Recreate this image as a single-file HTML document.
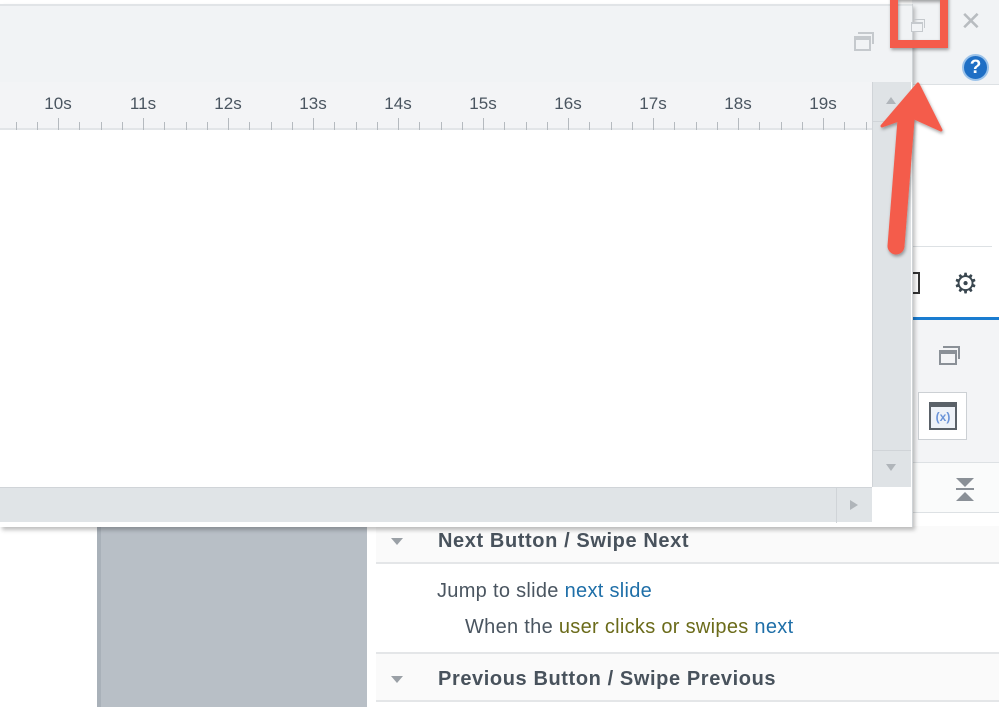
<!DOCTYPE html>
<html><head><style>
*{margin:0;padding:0;box-sizing:border-box}
body{width:999px;height:707px;overflow:hidden;background:#fff;position:relative;font-family:"Liberation Sans",sans-serif}
.a{position:absolute}
</style></head><body>
<div class="a" style="left:912px;top:0;width:87px;height:85px;background:#f1f3f5;border-bottom:1px solid #dde1e4"></div>
<div class="a" style="left:960px;top:6px;font-size:26px;color:#b8bcc0">✕</div>
<div class="a" style="left:962px;top:54px;width:27px;height:27px;border-radius:50%;background:#1f6fc5;border:2px solid #9cc3ea;color:#fff;font-weight:bold;font-size:19px;text-align:center;line-height:23px">?</div>
<div class="a" style="left:912px;top:246px;width:80px;height:1px;background:#dde1e4"></div>
<div class="a" style="left:912px;top:272px;width:8px;height:22px;border:2px solid #333;border-left:none"></div>
<div class="a" style="left:953px;top:267px;font-size:28px;color:#3a4750">⚙</div>
<div class="a" style="left:912px;top:317px;width:87px;height:3px;background:#1a7cd0"></div>
<div class="a" style="left:912px;top:320px;width:87px;height:143px;background:#f3f4f6;border-bottom:1px solid #dde1e4"></div>
<div class="a" style="left:943px;top:346px;width:17px;height:13px;border:2px solid #8a9097;border-bottom:none;border-left:none"></div>
<div class="a" style="left:939px;top:350px;width:18px;height:15px;border:2px solid #8a9097;border-top-width:4px;background:#f3f4f6"></div>
<div class="a" style="left:918px;top:392px;width:49px;height:48px;background:#fff;border:1px solid #ccd0d4"></div>
<div class="a" style="left:929px;top:402px;width:28px;height:28px;border:2px solid #5a6168;border-top-width:5px;background:#eef2f8;color:#6a93d8;font-size:12px;font-weight:bold;text-align:center;line-height:20px">(x)</div>
<div class="a" style="left:912px;top:463px;width:87px;height:50px;background:#fafbfb;border-bottom:1px solid #dde1e4"></div>
<div class="a" style="left:956px;top:478px;width:0;height:0;border-left:9px solid transparent;border-right:9px solid transparent;border-top:9px solid #8a9097"></div>
<div class="a" style="left:956px;top:488px;width:18px;height:2px;background:#8a9097"></div>
<div class="a" style="left:956px;top:492px;width:0;height:0;border-left:9px solid transparent;border-right:9px solid transparent;border-bottom:9px solid #8a9097"></div>

<div class="a" style="left:97px;top:526px;width:270px;height:181px;background:#b8bfc6;border-left:4px solid #a9b1b9"></div>
<div class="a" style="left:376px;top:526px;width:623px;height:38px;background:#fafafa;border-bottom:2px solid #e4e6e8"></div>
<div class="a" style="left:391px;top:538px;border-left:6px solid transparent;border-right:6px solid transparent;border-top:7px solid #9aa0a6"></div>
<div class="a" style="left:438px;top:530px;font-size:20px;font-weight:bold;color:#48525c;letter-spacing:0.6px">Next Button / Swipe Next</div>
<div class="a" style="left:437px;top:580px;font-size:20px;color:#4a5560;letter-spacing:0.3px">Jump to slide <span style="color:#1f6fa8">next slide</span></div>
<div class="a" style="left:465px;top:616px;font-size:20px;color:#4a5560;letter-spacing:0.3px">When the <span style="color:#6b6b1a">user clicks or swipes</span> <span style="color:#1f6fa8">next</span></div>
<div class="a" style="left:376px;top:652px;width:623px;height:50px;background:#fafafa;border-top:2px solid #e4e6e8;border-bottom:2px solid #e4e6e8"></div>
<div class="a" style="left:391px;top:676px;border-left:6px solid transparent;border-right:6px solid transparent;border-top:7px solid #9aa0a6"></div>
<div class="a" style="left:438px;top:668px;font-size:20px;font-weight:bold;color:#48525c;letter-spacing:0.6px">Previous Button / Swipe Previous</div>

<div class="a" style="left:0;top:4px;width:913px;height:523px;background:#fff;box-shadow:2px 3px 4px rgba(0,0,0,.25);border-right:1px solid #cfd3d6">
 <div class="a" style="left:0;top:0;width:912px;height:78px;background:#f1f3f5;border-top:2px solid #e1e4e7"></div>
 <div class="a" style="left:858px;top:28px;width:16px;height:12px;border:2px solid #c5c9cd;border-bottom:none;border-left:none"></div>
 <div class="a" style="left:854px;top:32px;width:17px;height:15px;border:2px solid #c5c9cd;border-top-width:4px;background:#f1f3f5"></div>
 <div class="a" style="left:914px;top:15px;width:11px;height:9px;border:1px solid #c5c9cd;border-bottom:none;border-left:none"></div>
 <div class="a" style="left:911px;top:18px;width:12px;height:10px;border:1px solid #c5c9cd;border-top-width:2px;background:#f1f3f5"></div>
 <div class="a" style="left:0;top:78px;width:872px;height:48px;background:#f3f4f6;border-bottom:2px solid #e2e5e8">
  <svg width="872" height="48" style="position:absolute;left:0;top:0">
   <g stroke="#b5babf" stroke-width="1">
    <path d="M16.5 40V48M37.5 40V48M79.5 40V48M101.5 40V48M122.5 40V48M164.5 40V48M186.5 40V48M207.5 40V48M249.5 40V48M271.5 40V48M292.5 40V48M334.5 40V48M356.5 40V48M377.5 40V48M419.5 40V48M441.5 40V48M462.5 40V48M504.5 40V48M526.5 40V48M547.5 40V48M589.5 40V48M611.5 40V48M632.5 40V48M674.5 40V48M696.5 40V48M717.5 40V48M759.5 40V48M781.5 40V48M802.5 40V48M844.5 40V48M866.5 40V48"/>
    <path d="M58.5 36V48M143.5 36V48M228.5 36V48M313.5 36V48M398.5 36V48M483.5 36V48M568.5 36V48M653.5 36V48M738.5 36V48M823.5 36V48"/>
   </g>
   <g font-family="Liberation Sans,sans-serif" font-size="17" fill="#4a5560" text-anchor="middle">
    <text x="58" y="27">10s</text><text x="143" y="27">11s</text><text x="228" y="27">12s</text><text x="313" y="27">13s</text><text x="398" y="27">14s</text><text x="483" y="27">15s</text><text x="568" y="27">16s</text><text x="653" y="27">17s</text><text x="738" y="27">18s</text><text x="823" y="27">19s</text>
   </g>
  </svg>
 </div>
 <div class="a" style="left:872px;top:78px;width:39px;height:405px;background:#dfe3e6;border-left:1px solid #d0d4d8">
  <div class="a" style="left:0;top:0;width:38px;height:40px;border-bottom:1px solid #d0d4d8"></div>
  <div class="a" style="left:13px;top:15px;border-left:5px solid transparent;border-right:5px solid transparent;border-bottom:7px solid #b0b5ba"></div>
  <div class="a" style="left:0;top:368px;width:38px;height:37px;border-top:1px solid #d0d4d8"></div>
  <div class="a" style="left:13px;top:382px;border-left:5px solid transparent;border-right:5px solid transparent;border-top:7px solid #b0b5ba"></div>
 </div>
 <div class="a" style="left:0;top:483px;width:872px;height:35px;background:#e0e4e7;border-top:1px solid #d0d4d8">
  <div class="a" style="left:836px;top:0;width:36px;height:35px;border-left:1px solid #d0d4d8"></div>
  <div class="a" style="left:850px;top:12px;border-top:5px solid transparent;border-bottom:5px solid transparent;border-left:8px solid #b0b5ba"></div>
 </div>
</div>

<svg class="a" style="left:0;top:0" width="999" height="707">
 <defs><filter id="s" x="-20%" y="-20%" width="140%" height="140%"><feDropShadow dx="1" dy="2" stdDeviation="1.5" flood-opacity=".35"/></filter></defs>
 <rect x="894" y="-4" width="50" height="48" fill="none" stroke="#f45c4c" stroke-width="8" filter="url(#s)"/>
 <g filter="url(#s)">
  <path d="M896 246 L906 120" stroke="#f45c4c" stroke-width="17" stroke-linecap="round" fill="none"/>
  <path d="M918 84 L941 130 L910 116 L882 126 Z" fill="#f45c4c" stroke="#f45c4c" stroke-width="3" stroke-linejoin="round"/>
 </g>
</svg>
</body></html>
